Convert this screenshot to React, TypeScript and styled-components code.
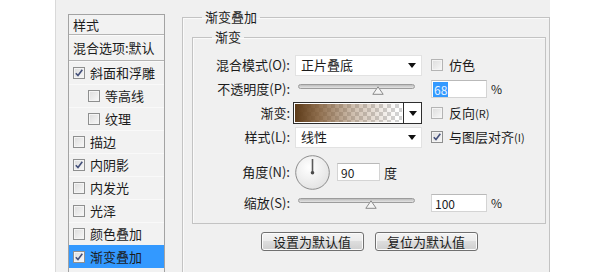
import styled, { createGlobalStyle } from "styled-components";

const GlobalStyle = createGlobalStyle`
  html, body {
    margin: 0;
    padding: 0;
    background: #ffffff;
  }
  body {
    font-family: "Noto Sans CJK SC", "Noto Sans", sans-serif;
    font-size: 13px;
    color: #1c1c1c;
  }
  * {
    box-sizing: border-box;
  }
`;

const Page = styled.div`
  width: 595px;
  height: 272px;
  overflow: hidden;
  padding-left: 55px;
`;

const Dialog = styled.div`
  width: 495px;
  height: 272px;
  background: #f0f0f0;
  border-left: 1px solid #d9d9d9;
  display: flex;
  align-items: flex-start;
  gap: 17px;
  padding: 14px 0 0 12px;
  overflow: hidden;
`;

/* ---------- left style list ---------- */

const StyleList = styled.div`
  width: 97px;
  height: 280px;
  flex: none;
  border: 1px solid #a3a3a3;
  background: #f2f2f2;
`;

const ListHeader = styled.div<{ $h: number }>`
  height: ${(p) => p.$h}px;
  display: flex;
  align-items: center;
  padding-left: 4px;
  border-bottom: 1px solid #b4b4b4;
  box-shadow: 0 1px 0 #fbfbfb;
  line-height: 16px;
  white-space: nowrap;
`;

const ListRow = styled.div<{ $indent?: boolean; $active?: boolean }>`
  height: 23px;
  display: flex;
  align-items: center;
  gap: 5px;
  padding-left: ${(p) => (p.$indent ? 19 : 4)}px;
  border-top: 1px solid ${(p) => (p.$active ? "#3399ff" : "#f9f9f9")};
  background: ${(p) => (p.$active ? "#3399ff" : "transparent")};
  line-height: 16px;
  white-space: nowrap;
`;

const Box = styled.span<{ $dim?: boolean }>`
  width: 12px;
  height: 12px;
  flex: none;
  border: 1px solid ${(p) => (p.$dim ? "#b4b4b4" : "#8e8f8f")};
  background: linear-gradient(135deg, #dcdcdc, #f8f8f8);
  box-shadow: inset 0 0 0 1px #f4f4f4;
  display: flex;
  align-items: center;
  justify-content: center;
`;

function CheckBox({ checked, dim }: { checked?: boolean; dim?: boolean }) {
  return (
    <Box $dim={dim}>
      {checked && (
        <svg width="10" height="10" viewBox="0 0 10 10">
          <path d="M1.8 5.2 L4 7.6 L8.3 1.8" fill="none" stroke="#44507a" strokeWidth="1.6" />
        </svg>
      )}
    </Box>
  );
}

/* ---------- right panel ---------- */

const GroupBox = styled.fieldset<{ $outer?: boolean }>`
  margin: ${(p) => (p.$outer ? "-5px 0 0 0" : "4px 0 0 0")};
  padding: ${(p) => (p.$outer ? "0 3px 0 9px" : "9px 0 11px 0")};
  border: 1px solid #c3c3c3;
  box-shadow: inset 1px 1px 0 #fafafa;
  min-width: 0;
  flex: ${(p) => (p.$outer ? 1 : "none")};
  height: ${(p) => (p.$outer ? "320px" : "auto")};
`;

const Legend = styled.legend<{ $offset: number }>`
  margin-left: ${(p) => p.$offset}px;
  padding: 0 3px;
  line-height: 16px;
  font-size: 13px;
`;

const FormGrid = styled.div`
  display: grid;
  grid-template-columns: 102px 127px 1fr;
  grid-template-rows: 22px 26px 22px 26px 44px 18px;
  align-items: center;
`;

const Label = styled.div`
  text-align: right;
  padding-right: 5px;
  line-height: 16px;
  white-space: nowrap;
`;

const Side = styled.div`
  display: flex;
  align-items: center;
  gap: 4px;
  padding-left: 9px;
  white-space: nowrap;
  line-height: 16px;
`;

const CheckLabel = styled.span`
  margin-left: 2px;
`;

const Small = styled.span`
  font-size: 11px;
`;

const Select = styled.div`
  width: 127px;
  height: 21px;
  background: #ffffff;
  border: 1px solid #e2e2e2;
  display: flex;
  align-items: center;
  justify-content: space-between;
  padding: 0 5px 0 5px;
  line-height: 16px;
`;

function Arrow() {
  return (
    <svg width="8" height="5" viewBox="0 0 8 5">
      <path d="M0 0 H8 L4 5 Z" fill="#111" />
    </svg>
  );
}

const SliderWrap = styled.div`
  position: relative;
  width: 117px;
  height: 14px;
  margin-left: 3px;
`;

const Track = styled.div`
  position: absolute;
  left: 0;
  right: 0;
  top: 2px;
  height: 5px;
  border-radius: 3px;
  border: 1px solid #9c9c9c;
  background: linear-gradient(#bdbdbd, #e4e4e4);
`;

const Thumb = styled.svg`
  position: absolute;
  top: 4px;
  margin-left: -6px;
`;

function Slider({ value }: { value: number }) {
  return (
    <SliderWrap>
      <Track />
      <Thumb width="12" height="9" viewBox="0 0 12 9" style={{ left: `${value * 100}%` }}>
        <path d="M6 0.8 L11.2 8.3 H0.8 Z" fill="#f4f4f4" stroke="#8a8a8a" strokeWidth="1" />
      </Thumb>
    </SliderWrap>
  );
}

const TextInput = styled.div<{ $w: number }>`
  width: ${(p) => p.$w}px;
  height: 18px;
  background: #ffffff;
  border: 1px solid #d4d4d4;
  border-top-color: #b9b9b9;
  display: flex;
  align-items: center;
  padding-left: 3px;
  font-size: 12px;
  line-height: 15px;
`;

const Selected = styled.span`
  background: #3399ff;
  color: #e8f3ff;
  padding: 0 1px;
  margin-left: -2px;
`;

const Unit = styled.span`
  font-size: 12px;
`;

const GradientPicker = styled.div`
  width: 129px;
  height: 22px;
  margin-left: -2px;
  border: 1px solid #2e2e2e;
  display: flex;
  background: #ffffff;
`;

const GradientSwatch = styled.div`
  flex: 1;
  margin: 1px;
  background:
    linear-gradient(90deg, rgba(92, 58, 24, 1) 0%, rgba(126, 88, 50, 0.85) 22%, rgba(150, 115, 80, 0.45) 55%, rgba(200, 190, 180, 0) 95%),
    conic-gradient(#d2d2d2 25%, #ffffff 0 50%, #d2d2d2 0 75%, #ffffff 0) 0 0 / 8px 8px;
`;

const GradientButton = styled.div`
  width: 18px;
  border-left: 1px solid #2e2e2e;
  display: flex;
  align-items: center;
  justify-content: center;
`;

const AngleRow = styled.div`
  display: flex;
  align-items: center;
  gap: 0;
  white-space: nowrap;
`;

const AngleInput = styled(TextInput)`
  margin: 0 4px 0 7px;
`;

function Dial() {
  return (
    <svg width="35" height="35" viewBox="0 0 35 35">
      <defs>
        <radialGradient id="dialFill" cx="40%" cy="35%" r="70%">
          <stop offset="0" stopColor="#ffffff" />
          <stop offset="1" stopColor="#e2e2e2" />
        </radialGradient>
      </defs>
      <circle cx="17.5" cy="17.5" r="16.8" fill="url(#dialFill)" stroke="#8d8d8d" strokeWidth="1" />
      <line x1="17.5" y1="4" x2="17.5" y2="17.5" stroke="#5a5a5a" strokeWidth="1.6" />
      <circle cx="17.5" cy="17.8" r="1.8" fill="#4a4a4a" />
    </svg>
  );
}

const ButtonRow = styled.div`
  display: flex;
  justify-content: center;
  gap: 11px;
  margin-top: 8px;
`;

const Button = styled.div`
  width: 103px;
  height: 19px;
  border: 1px solid #707070;
  border-radius: 3px;
  background: linear-gradient(#f3f3f3, #ebebeb 50%, #dddddd 50%, #cfcfcf);
  box-shadow: inset 0 0 0 1px #fbfbfb;
  display: flex;
  align-items: center;
  justify-content: center;
  line-height: 16px;
`;

const listItems: { name: string; checked?: boolean; indent?: boolean; active?: boolean }[] = [
  { name: "斜面和浮雕", checked: true },
  { name: "等高线", indent: true },
  { name: "纹理", indent: true },
  { name: "描边" },
  { name: "内阴影", checked: true },
  { name: "内发光" },
  { name: "光泽" },
  { name: "颜色叠加" },
  { name: "渐变叠加", checked: true, active: true },
];

export default function App() {
  return (
    <Page>
      <GlobalStyle />
      <Dialog>
        <StyleList>
          <ListHeader $h={20}>样式</ListHeader>
          <ListHeader $h={26}>混合选项:默认</ListHeader>
          {listItems.map((item) => (
            <ListRow key={item.name} $indent={item.indent} $active={item.active}>
              <CheckBox checked={item.checked} />
              <span>{item.name}</span>
            </ListRow>
          ))}
        </StyleList>

        <GroupBox $outer>
          <Legend $offset={10}>渐变叠加</Legend>
          <GroupBox>
            <Legend $offset={19}>渐变</Legend>
            <FormGrid>
              <Label>混合模式(O):</Label>
              <Select>
                <span>正片叠底</span>
                <Arrow />
              </Select>
              <Side>
                <CheckBox dim />
                <CheckLabel>仿色</CheckLabel>
              </Side>

              <Label>不透明度(P):</Label>
              <Slider value={0.68} />
              <Side>
                <TextInput $w={56}>
                  <Selected>68</Selected>
                </TextInput>
                <Unit>%</Unit>
              </Side>

              <Label>渐变:</Label>
              <GradientPicker>
                <GradientSwatch />
                <GradientButton>
                  <Arrow />
                </GradientButton>
              </GradientPicker>
              <Side>
                <CheckBox dim />
                <CheckLabel>
                  反向<Small>(R)</Small>
                </CheckLabel>
              </Side>

              <Label>样式(L):</Label>
              <Select>
                <span>线性</span>
                <Arrow />
              </Select>
              <Side>
                <CheckBox checked />
                <CheckLabel>
                  与图层对齐<Small>(I)</Small>
                </CheckLabel>
              </Side>

              <Label>角度(N):</Label>
              <AngleRow>
                <Dial />
                <AngleInput $w={43}>90</AngleInput>
                <span>度</span>
              </AngleRow>
              <div />

              <Label>缩放(S):</Label>
              <Slider value={0.62} />
              <Side>
                <TextInput $w={56}>100</TextInput>
                <Unit>%</Unit>
              </Side>
            </FormGrid>
          </GroupBox>
          <ButtonRow>
            <Button>设置为默认值</Button>
            <Button>复位为默认值</Button>
          </ButtonRow>
        </GroupBox>
      </Dialog>
    </Page>
  );
}
